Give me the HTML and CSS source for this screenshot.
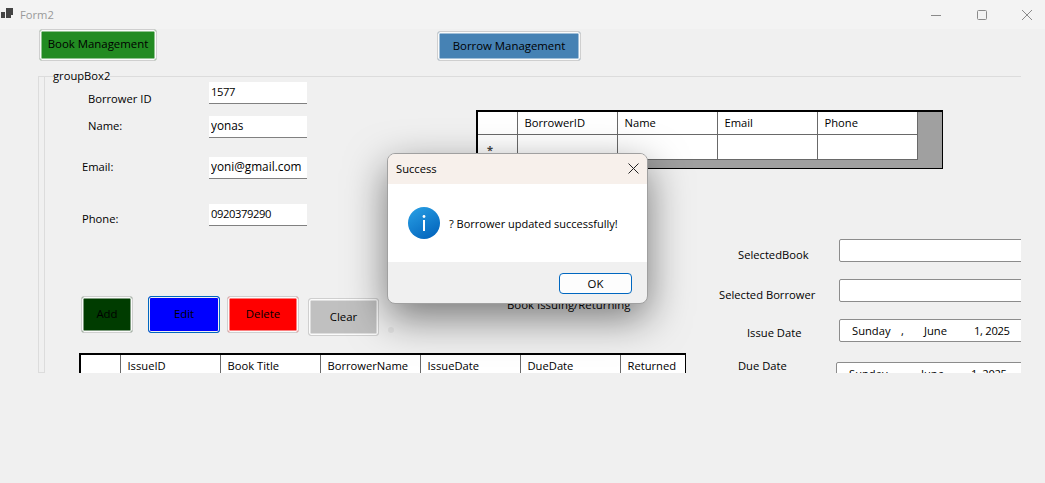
FILE: index.html
```html
<!DOCTYPE html>
<html lang="en">
  <head>
    <meta charset="UTF-8" />
    <title>Form2</title>
    <link rel="stylesheet" href="styles.css">
  </head>
  <body>
    <div class="window">
      <div class="titlebar">
        <svg class="app-icon" width="14" height="12" viewBox="0 0 14 12">
          <path fill="#444" d="M1 5h4v6H1zM6 1h7v7h-2v3H6z" />
        </svg>
        <span class="title-text">Form2</span>
        <div class="win-controls">
          <svg width="10" height="10" viewBox="0 0 10 10"><path d="M0 5.5h10" stroke="#8a8a8a" fill="none" /></svg>
          <svg width="10" height="10" viewBox="0 0 10 10"><rect x="0.5" y="0.5" width="9" height="9" rx="1" stroke="#8a8a8a" fill="none" /></svg>
          <svg width="10" height="10" viewBox="0 0 10 10"><path d="M0 0l10 10M10 0L0 10" stroke="#8a8a8a" fill="none" /></svg>
        </div>
      </div>

      <div class="form">
        <div class="top-buttons">
          <button class="btn btn-book">Book Management</button>
          <button class="btn btn-borrow">Borrow Management</button>
        </div>

        <div class="group">
          <div class="group-title">groupBox2</div>
          <div class="group-body">
            <div class="strip"></div>
            <div class="group-content">
              <div class="upper">
                <div class="fields">
                  <div class="field field-id">
                    <label>Borrower ID</label>
                    <input class="digits" type="text" value="1577" />
                  </div>
                  <div class="field field-name">
                    <label>Name:</label>
                    <input type="text" value="yonas" />
                  </div>
                  <div class="field field-email">
                    <label>Email:</label>
                    <input type="text" value="yoni@gmail.com" />
                  </div>
                  <div class="field field-phone">
                    <label>Phone:</label>
                    <input class="digits" type="text" value="0920379290" />
                  </div>
                </div>

                <div class="grid-view borrowers">
                  <table>
                    <tr>
                      <th class="row-head"></th>
                      <th>BorrowerID</th>
                      <th>Name</th>
                      <th>Email</th>
                      <th>Phone</th>
                    </tr>
                    <tr class="new-row">
                      <td class="row-head"><span class="star">*</span></td>
                      <td></td>
                      <td></td>
                      <td></td>
                      <td></td>
                    </tr>
                  </table>
                </div>
              </div>

              <div class="lower">
                <div class="lower-left">
                  <div class="actions">
                    <button class="btn btn-add">Add</button>
                    <button class="btn btn-edit">Edit</button>
                    <button class="btn btn-delete">Delete</button>
                    <button class="btn btn-clear">Clear</button>
                    <span class="dot"></span>
                    <span class="issuing-label">Book Issuing/Returning</span>
                  </div>

                  <div class="grid-view issues">
                    <table>
                      <tr>
                        <th class="row-head"></th>
                        <th>IssueID</th>
                        <th>Book Title</th>
                        <th>BorrowerName</th>
                        <th>IssueDate</th>
                        <th>DueDate</th>
                        <th class="last">Returned</th>
                      </tr>
                    </table>
                  </div>
                </div>

                <div class="issue-form">
                  <div class="issue-row row-book">
                    <label>SelectedBook</label>
                    <div class="box"></div>
                  </div>
                  <div class="issue-row row-borrower">
                    <label>Selected Borrower</label>
                    <div class="box"></div>
                  </div>
                  <div class="issue-row row-issue">
                    <label>Issue Date</label>
                    <div class="box date">
                      <span class="d-day">Sunday</span>
                      <span class="d-comma">,</span>
                      <span class="d-month">June</span>
                      <span class="d-year">1, 2025</span>
                    </div>
                  </div>
                  <div class="issue-row row-due">
                    <label>Due Date</label>
                    <div class="box date">
                      <span class="d-day">Sunday</span>
                      <span class="d-comma">,</span>
                      <span class="d-month">June</span>
                      <span class="d-year">1, 2025</span>
                    </div>
                  </div>
                </div>
              </div>
            </div>
          </div>
        </div>
      </div>

      <div class="dialog">
        <div class="dialog-title">
          <span>Success</span>
          <svg width="11" height="11" viewBox="0 0 11 11"><path d="M0.5 0.5l10 10M10.5 0.5l-10 10" stroke="#222" fill="none" /></svg>
        </div>
        <div class="dialog-body">
          <svg width="32" height="32" viewBox="0 0 32 32">
            <defs>
              <linearGradient id="info" x1="0" y1="0" x2="0.6" y2="1">
                <stop offset="0" stop-color="#2aa2e6" />
                <stop offset="1" stop-color="#0568bf" />
              </linearGradient>
            </defs>
            <circle cx="16" cy="16" r="16" fill="url(#info)" />
            <circle cx="16" cy="9.5" r="1.4" fill="#fff" />
            <rect x="15" y="13" width="2" height="11" fill="#fff" />
          </svg>
          <span>? Borrower updated successfully!</span>
        </div>
        <div class="dialog-footer">
          <button class="btn-ok">OK</button>
        </div>
      </div>
    </div>
  </body>
</html>
```

FILE: styles.css
```css
* {
  box-sizing: border-box;
  font-family: "Open Sans", "Noto Sans", sans-serif;
}

body {
  margin: 0;
  background: #f0f0f0;
  font-size: 11.2px;
  color: #000;
}

.window {
  position: relative;
  width: 1045px;
  height: 483px;
  overflow: hidden;
  display: flex;
  flex-direction: column;
}

/* title bar */
.titlebar {
  height: 29px;
  flex: none;
  display: flex;
  align-items: center;
  background: #f3f3f3;
  padding: 0 13px 0 0;
}

.app-icon {
  margin-top: -3px;
}

.title-text {
  margin-left: 6px;
  color: #999;
}

.win-controls {
  margin-left: auto;
  display: flex;
  gap: 35.5px;
}

/* form */
.form {
  flex: 1;
  padding-left: 38px;
}

.top-buttons {
  height: 32px;
  display: flex;
  align-items: flex-end;
}

.btn {
  border: 1px solid #cfcfcf;
  border-radius: 3px;
  box-shadow: inset 0 0 0 1.5px #fbfbfb;
  font-size: 11.4px;
  color: #000;
  padding: 0 0 2px;
}

.btn-book {
  width: 118px;
  height: 32px;
  margin-left: 1px;
  padding-bottom: 4px;
  background: #228b22;
}

.btn-borrow {
  width: 144px;
  height: 30px;
  margin-left: 280px;
  background: #4682b4;
}

.group {
  width: 983px;
  height: 305px;
  margin-top: 7px;
  overflow: hidden;
}

.group-title {
  height: 16px;
  display: flex;
  align-items: center;
  line-height: 16px;
}

.group-title::before,
.group-title::after {
  content: "";
  height: 1px;
  background: #dcdcdc;
}

.group-title::before {
  width: 15px;
}

.group-title::after {
  flex: 1;
}

.group-body {
  display: flex;
  margin-top: -8px;
}

.strip {
  width: 7px;
  height: 297px;
  flex: none;
  border: 1px solid #dcdcdc;
  border-top: none;
}

.group-content {
  flex: 1;
  padding-left: 34px;
}

.upper {
  height: 163px;
  display: flex;
  align-items: flex-start;
}

.fields {
  width: 228px;
  flex: none;
  padding-top: 6px;
}

.field {
  display: flex;
  height: 22px;
}

.field label {
  width: 130px;
  flex: none;
  line-height: 16px;
}

.field input {
  width: 98px;
  height: 22px;
  border: none;
  border-bottom: 1px solid #808080;
  background: #fff;
  padding: 0 0 3px 2px;
  font-size: 11.8px;
  color: #000;
}

.field input.digits {
  font-size: 11.2px;
  letter-spacing: -0.4px;
}

.field-id label {
  padding: 9px 0 0 9px;
}

.field-name {
  margin-top: 12px;
}

.field-name label {
  padding: 2px 0 0 9px;
}

.field-email {
  margin-top: 19px;
}

.field-email label {
  padding: 2px 0 0 3px;
}

.field-phone {
  margin-top: 25px;
}

.field-phone label {
  padding: 7px 0 0 3px;
}

/* data grids */
.grid-view {
  border-style: solid;
  border-color: #000;
  border-width: 2px 1px 1px 2px;
  background: #a0a0a0;
}

.grid-view table {
  border-collapse: collapse;
  table-layout: fixed;
  background: #fff;
}

.grid-view th,
.grid-view td {
  width: 100px;
  padding: 0 0 0 7px;
  border-right: 1px solid #696969;
  border-bottom: 1px solid #696969;
  font-weight: normal;
  text-align: left;
  line-height: 16px;
}

.grid-view th {
  height: 22px;
}

.grid-view td {
  height: 25px;
}

.borrowers {
  width: 467px;
  height: 59px;
  margin: 34px 0 0 169px;
}

.borrowers .row-head {
  width: 39px;
}

.star {
  display: block;
  margin: 6px 0 0 2px;
  font-size: 11px;
  font-weight: bold;
  color: #444;
}

.lower {
  display: flex;
  align-items: flex-start;
}

.lower-left {
  width: 607px;
  flex: none;
  padding-top: 57px;
}

.actions {
  height: 40px;
  display: flex;
  align-items: flex-start;
}

.btn-add {
  width: 52px;
  height: 37px;
  margin-left: 2px;
  background: #003c00;
}

.btn-edit {
  width: 72px;
  height: 37px;
  margin-left: 15px;
  background: #00f;
  border: 1.5px solid #0067c0;
  box-shadow: inset 0 0 0 1px #f0f0f0;
}

.btn-delete {
  width: 72px;
  height: 37px;
  margin-left: 7px;
  background: #f00;
}

.btn-clear {
  width: 71px;
  height: 38px;
  margin: 2px 0 0 9px;
  background: #c0c0c0;
}

.dot {
  width: 6px;
  height: 6px;
  margin: 31px 0 0 9px;
  border-radius: 50%;
  background: #e4e4e4;
}

.issuing-label {
  margin: 1px 0 0 113px;
  font-size: 11.4px;
  line-height: 16px;
  white-space: nowrap;
}

.issues {
  width: 607px;
  height: 40px;
  margin-top: 17px;
  background: #fff;
}

.issues .row-head {
  width: 39px;
}

.issues .last {
  width: 65px;
  border-right: none;
}

.issues th {
  border-bottom: none;
  height: 30px;
  padding-bottom: 8px;
}

/* issue form on the right */
.issue-form {
  flex: none;
  width: 335px;
}

.issue-row {
  display: flex;
  align-items: flex-start;
  height: 23px;
  margin-top: 17px;
}

.issue-row:first-child {
  margin-top: 0;
}

.issue-row label {
  width: 153px;
  flex: none;
  line-height: 16px;
}

.row-book label {
  padding: 8px 0 0 52px;
}

.row-borrower label {
  padding: 8px 0 0 33px;
}

.row-issue label {
  padding: 6px 0 0 61px;
}

.row-due {
  margin-top: 20px;
}

.row-due label {
  width: 150px;
  margin-top: -4px;
  padding-left: 52px;
}

.box {
  width: 240px;
  height: 23px;
  flex: none;
  border: 1px solid #8c8c8c;
  border-radius: 2px;
  background: #fff;
}

.date {
  display: flex;
  align-items: center;
  padding: 0 0 1px 12px;
}

.d-day {
  width: 49px;
}

.d-comma {
  width: 23px;
}

.d-month {
  width: 50px;
}

.d-year {
  letter-spacing: -0.3px;
}

/* message box */
.dialog {
  position: absolute;
  left: 387px;
  top: 153px;
  width: 261px;
  height: 151px;
  border: 1px solid #a0a0a0;
  border-radius: 8px;
  overflow: hidden;
  background: #f0f0f0;
  box-shadow: 0 14px 40px rgba(0, 0, 0, 0.5);
  display: flex;
  flex-direction: column;
}

.dialog-title {
  height: 30px;
  flex: none;
  display: flex;
  align-items: center;
  justify-content: space-between;
  padding: 0 8px 2px 8px;
  background: #f7f0eb;
}

.dialog-body {
  height: 78px;
  flex: none;
  display: flex;
  align-items: center;
  gap: 9px;
  padding-left: 20px;
  background: #fff;
  font-size: 11px;
}

.dialog-footer {
  flex: 1;
  display: flex;
  justify-content: flex-end;
  padding: 11px 15px 0 0;
}

.btn-ok {
  width: 73px;
  height: 21px;
  padding: 0 0 1px;
  border: 1px solid #0067c0;
  border-radius: 4px;
  background: #fdfdfd;
  font-size: 11.4px;
  color: #000;
}
```
